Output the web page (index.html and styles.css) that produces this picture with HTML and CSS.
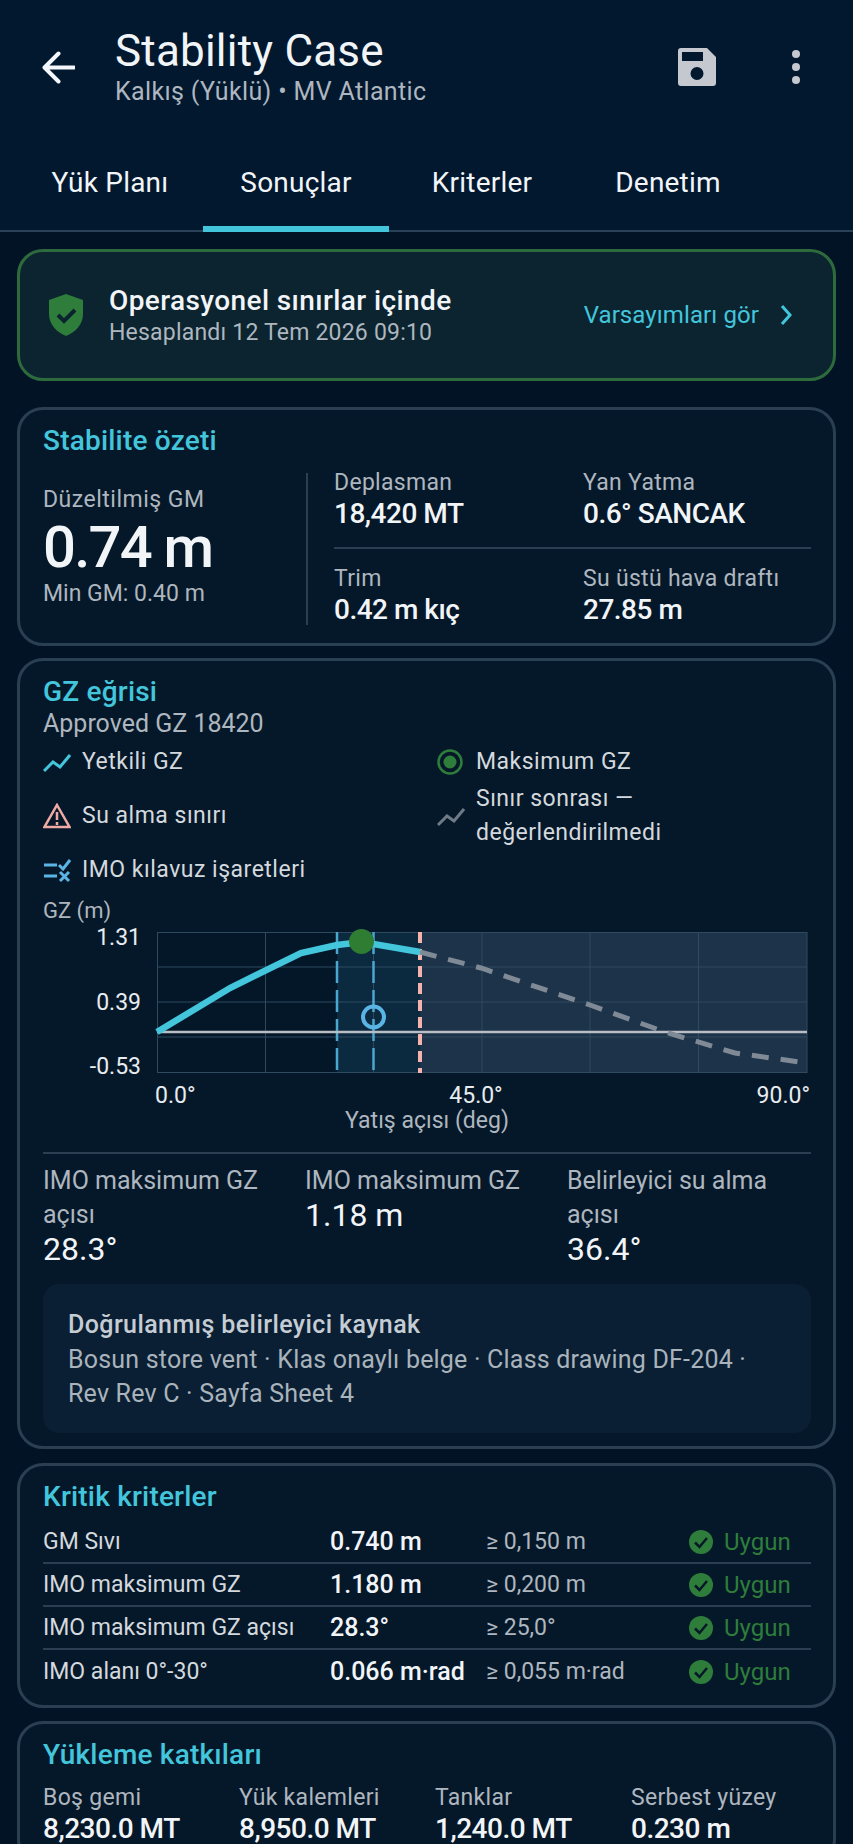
FILE: index.html
```html
<!DOCTYPE html>
<html lang="tr">
<head>
  <meta charset="UTF-8">
  <meta name="viewport" content="width=device-width, initial-scale=1.0">
  <title>Stability Case</title>
  <link rel="stylesheet" href="styles.css">
</head>
<body>
  <header class="appbar">
    <div class="topbar">
      <svg class="ic-back" viewBox="0 0 33 33" width="33" height="33"><path d="M32 16.500H3M16.500 2.500 2.500 16.500l14 14" fill="none" stroke="#f4f6fb" stroke-width="4" stroke-linecap="round" stroke-linejoin="round"/></svg>
      <div class="heading">
        <h1>Stability Case</h1>
        <p>Kalkış (Yüklü) • MV Atlantic</p>
      </div>
      <svg class="ic-save" viewBox="0 0 38 38" width="38" height="38"><path fill-rule="evenodd" d="M3 0h26l9 9v26a3 3 0 0 1-3 3H3a3 3 0 0 1-3-3V3a3 3 0 0 1 3-3zM4 4v9h21V4zM19 19a6.500 6.500 0 1 0 0 13 6.500 6.500 0 0 0 0-13z" fill="#c5c8cf"/></svg>
      <svg class="ic-more" viewBox="0 0 8 34" width="8" height="34"><circle cx="4" cy="4" r="4"/><circle cx="4" cy="17" r="4"/><circle cx="4" cy="30" r="4"/></svg>
    </div>
    <nav class="tabs">
      <a>Yük Planı</a>
      <a class="active">Sonuçlar</a>
      <a>Kriterler</a>
      <a>Denetim</a>
    </nav>
  </header>

  <main>
    <section class="status">
      <svg class="ic-shield" viewBox="0 0 34 42" width="34" height="42"><path d="M17 0 34 6v14c0 10-7 18-17 22C7 38 0 30 0 20V6z" fill="#2e7d3a"/><path d="M9 21l6 6 11-11" fill="none" stroke="#0b2430" stroke-width="4"/></svg>
      <div class="status-text">
        <strong>Operasyonel sınırlar içinde</strong>
        <span>Hesaplandı 12 Tem 2026 09:10</span>
      </div>
      <a class="status-link">Varsayımları gör</a>
      <svg class="ic-chevron" viewBox="0 0 12 22" width="12" height="22"><path d="M2 2l8 9-8 9" fill="none" stroke="#43c6dc" stroke-width="3"/></svg>
    </section>

    <section class="card summary">
      <h2>Stabilite özeti</h2>
      <div class="summary-body">
        <div class="summary-main">
          <span class="label">Düzeltilmiş GM</span>
          <strong class="big">0.74 m</strong>
          <span class="label">Min GM: 0.40 m</span>
        </div>
        <div class="summary-grid">
          <div class="stat"><span class="label">Deplasman</span><strong>18,420 MT</strong></div>
          <div class="stat"><span class="label">Yan Yatma</span><strong>0.6° SANCAK</strong></div>
          <div class="stat"><span class="label">Trim</span><strong>0.42 m kıç</strong></div>
          <div class="stat"><span class="label">Su üstü hava draftı</span><strong>27.85 m</strong></div>
        </div>
      </div>
    </section>

    <section class="card gz">
      <h2>GZ eğrisi</h2>
      <p class="gz-sub">Approved GZ 18420</p>
      <ul class="legend">
        <li><svg viewBox="0 0 28 26" width="28" height="26"><path d="M1 22l9-9 7 5L27 6" fill="none" stroke="#43c6dc" stroke-width="3"/></svg>Yetkili GZ</li>
        <li><svg viewBox="0 0 28 26" width="28" height="26"><circle cx="13" cy="13" r="11.500" fill="none" stroke="#2e7d3a" stroke-width="2.500"/><circle cx="13" cy="13" r="6.500" fill="#2e7d3a"/></svg>Maksimum GZ</li>
        <li><svg viewBox="0 0 28 26" width="28" height="26"><path d="M14 2 26.500 24h-25z" fill="none" stroke="#f0aaa4" stroke-width="2.500"/><path d="M14 9v8M14 19v3" stroke="#f0aaa4" stroke-width="2.500"/></svg>Su alma sınırı</li>
        <li><svg viewBox="0 0 28 26" width="28" height="26"><path d="M1 22l9-9 7 5L27 6" fill="none" stroke="#6f7a86" stroke-width="3"/></svg><span>Sınır sonrası —<br>değerlendirilmedi</span></li>
        <li><svg viewBox="0 0 28 26" width="28" height="26"><path d="M1 8h13M1 19h13M16 8l4 4 7-9M17 15l9 9M26 15l-9 9" fill="none" stroke="#5ab5e4" stroke-width="3"/></svg>IMO kılavuz işaretleri</li>
      </ul>

      <svg class="chart" viewBox="0 0 768 248" width="768" height="248">
        <text class="axis" x="0" y="31">GZ (m)</text>
        <text class="axis tick" x="98" y="58" text-anchor="end">1.31</text>
        <text class="axis tick" x="98" y="123" text-anchor="end">0.39</text>
        <text class="axis tick" x="98" y="187" text-anchor="end">-0.53</text>

        <rect x="114" y="45" width="180" height="141" fill="#031729"/>
        <rect x="294" y="45" width="83" height="141" fill="#0b2a40"/>
        <rect x="377" y="45" width="387" height="141" fill="#1d3349"/>
        <path class="grid" d="M114 45.500H764M114 80H764M114 115H764M114 150H764M114 185.500H764M114.500 45V186M222.500 45V186M330.500 45V186M439 45V186M547 45V186M655.500 45V186M764 45V186"/>

        <path d="M294 45V186M330.500 45V186" stroke="#4aa8d0" stroke-width="2.500" stroke-dasharray="22 7" fill="none"/>
        <path d="M114 145H764" stroke="#b9bec4" stroke-width="2.500"/>
        <path d="M377 45V186" stroke="#f4b3ad" stroke-width="4" stroke-dasharray="11 6" fill="none"/>
        <path d="M377 65L438 81 547 118 622 145 692 166 764 176" stroke="#7f8a96" stroke-width="5" stroke-dasharray="17 12" fill="none"/>
        <path d="M114 145L187 101 258 66 294 58 319 55 377 65" stroke="#43c6dc" stroke-width="6.500" fill="none"/>
        <circle cx="318.500" cy="54.500" r="12.500" fill="#2e7d32"/>
        <circle cx="330.500" cy="130" r="10.500" fill="none" stroke="#5ab5e4" stroke-width="4"/>

        <text class="axis tick" x="112" y="216">0.0°</text>
        <text class="axis tick" x="433" y="216" text-anchor="middle">45.0°</text>
        <text class="axis tick" x="767" y="216" text-anchor="end">90.0°</text>
        <text class="axis axis-title" x="384" y="241" text-anchor="middle">Yatış açısı (deg)</text>
      </svg>

      <div class="metrics">
        <div class="metric"><span class="label">IMO maksimum GZ açısı</span><strong>28.3°</strong></div>
        <div class="metric"><span class="label">IMO maksimum GZ</span><strong>1.18 m</strong></div>
        <div class="metric"><span class="label">Belirleyici su alma açısı</span><strong>36.4°</strong></div>
      </div>

      <div class="source">
        <strong>Doğrulanmış belirleyici kaynak</strong>
        <p>Bosun store vent · Klas onaylı belge · Class drawing DF-204 · Rev Rev C · Sayfa Sheet 4</p>
      </div>
    </section>

    <section class="card criteria">
      <h2>Kritik kriterler</h2>
      <div class="crit-row">
        <span>GM Sıvı</span><strong>0.740 m</strong><span class="limit">≥ 0,150 m</span>
        <span class="ok"><svg viewBox="0 0 24 24" width="24" height="24"><circle cx="12" cy="12" r="12" fill="#2e7d3a"/><path d="M6 12.500l4.500 4.500L18 8" fill="none" stroke="#051829" stroke-width="2.500"/></svg>Uygun</span>
      </div>
      <div class="crit-row">
        <span>IMO maksimum GZ</span><strong>1.180 m</strong><span class="limit">≥ 0,200 m</span>
        <span class="ok"><svg viewBox="0 0 24 24" width="24" height="24"><circle cx="12" cy="12" r="12" fill="#2e7d3a"/><path d="M6 12.500l4.500 4.500L18 8" fill="none" stroke="#051829" stroke-width="2.500"/></svg>Uygun</span>
      </div>
      <div class="crit-row">
        <span>IMO maksimum GZ açısı</span><strong>28.3°</strong><span class="limit">≥ 25,0°</span>
        <span class="ok"><svg viewBox="0 0 24 24" width="24" height="24"><circle cx="12" cy="12" r="12" fill="#2e7d3a"/><path d="M6 12.500l4.500 4.500L18 8" fill="none" stroke="#051829" stroke-width="2.500"/></svg>Uygun</span>
      </div>
      <div class="crit-row">
        <span>IMO alanı 0°-30°</span><strong>0.066 m·rad</strong><span class="limit">≥ 0,055 m·rad</span>
        <span class="ok"><svg viewBox="0 0 24 24" width="24" height="24"><circle cx="12" cy="12" r="12" fill="#2e7d3a"/><path d="M6 12.500l4.500 4.500L18 8" fill="none" stroke="#051829" stroke-width="2.500"/></svg>Uygun</span>
      </div>
    </section>

    <section class="card loads">
      <h2>Yükleme katkıları</h2>
      <div class="loads-grid">
        <div class="stat"><span class="label">Boş gemi</span><strong>8,230.0 MT</strong></div>
        <div class="stat"><span class="label">Yük kalemleri</span><strong>8,950.0 MT</strong></div>
        <div class="stat"><span class="label">Tanklar</span><strong>1,240.0 MT</strong></div>
        <div class="stat"><span class="label">Serbest yüzey</span><strong>0.230 m</strong></div>
      </div>
    </section>
  </main>
</body>
</html>
```

FILE: styles.css
```css
/* Reset */
* { box-sizing: border-box; }

html, body {
  height: 1844px;
  overflow: hidden;
}

body {
  margin: 0;
  width: 853px;
  background: #021325;
  color: #f2f5f8;
  font-family: Roboto, "Noto Sans", sans-serif;
  font-size: 24px;
}

h1, h2, p, ul { margin: 0; padding: 0; }
strong { font-weight: 500; }

/* --- App bar --- */
.appbar { background: #01182f; }

.topbar {
  display: flex;
  align-items: center;
  height: 134px;
  padding-left: 42px;
}

.ic-back { flex: none; }

.heading {
  flex: 1;
  margin-left: 40px;
}

.heading h1 {
  font-size: 44px;
  font-weight: 400;
  line-height: 48px;
  letter-spacing: 0.2px;
}

.heading p {
  font-size: 25px;
  line-height: 33px;
  letter-spacing: 0.35px;
  color: #aeb6bf;
}

.ic-save { flex: none; margin-right: 76px; }
.ic-more { flex: none; margin-right: 53px; fill: #c5c8cf; }

.tabs {
  display: flex;
  height: 98px;
  padding-left: 17px;
  border-bottom: 2px solid #2a4258;
}

.tabs a {
  display: flex;
  align-items: center;
  justify-content: center;
  width: 186px;
  padding-top: 4px;
  font-size: 28px;
  letter-spacing: 0.2px;
  margin-bottom: -2px;
  border-bottom: 6px solid transparent;
}

.tabs a.active { border-bottom-color: #43c6dc; }

/* --- Contenuto --- */
main {
  display: flex;
  flex-direction: column;
  gap: 13px;
  padding: 17px 17px 0;
}

.status {
  display: flex;
  align-items: center;
  height: 132px;
  margin-bottom: 13px;
  padding: 0 41px 0 29px;
  background: #0b2430;
  border: 3px solid #2d6b3c;
  border-radius: 26px;
}

.status-text {
  flex: 1;
  display: flex;
  flex-direction: column;
  margin-left: 26px;
}

.status-text strong { font-size: 28px; line-height: 36px; letter-spacing: 0.4px; }
.status-text span { font-size: 23px; line-height: 28px; letter-spacing: 0.2px; color: #aeb6bf; }

.status-link { font-size: 24px; letter-spacing: 0.1px; color: #43c6dc; margin-right: 21px; }

.card {
  padding: 13px 22px 16px 23px;
  background: #051829;
  border: 3px solid #2a3f52;
  border-radius: 26px;
}

.card h2 {
  font-size: 28px;
  font-weight: 500;
  line-height: 36px;
  letter-spacing: 0.2px;
  color: #43c6dc;
}

.label {
  font-size: 23px;
  line-height: 34px;
  color: #aeb6bf;
}

.stat {
  display: flex;
  flex-direction: column;
}

.stat .label { line-height: 28px; letter-spacing: 0.3px; }
.stat strong { font-size: 28px; line-height: 34px; letter-spacing: -0.5px; }

/* Riepilogo */
.summary-body {
  display: flex;
  margin-top: 10px;
}

.summary-main {
  width: 265px;
  display: flex;
  flex-direction: column;
  justify-content: center;
  margin: 4px 0 2px;
  padding-bottom: 4px;
  border-right: 2px solid #2a3f52;
}

.summary-main .label:first-child { letter-spacing: 0.5px; }

.big {
  font-size: 58px;
  line-height: 60px;
  letter-spacing: -1.8px;
}

.summary-grid {
  flex: 1;
  display: grid;
  grid-template-columns: 249px 1fr;
  margin-left: 26px;
}

.summary-grid .stat:nth-child(-n+2) {
  border-bottom: 2px solid #2a3f52;
  padding-bottom: 16px;
}

.summary-grid .stat:nth-child(n+3) { padding-top: 16px; }

/* GZ */
.gz { margin-top: -1px; padding-bottom: 13px; }

.gz-sub {
  font-size: 25px;
  line-height: 28px;
  color: #aeb6bf;
}

.legend {
  display: grid;
  grid-template-columns: 394px 1fr;
  gap: 3px 0;
  margin-top: 7px;
  list-style: none;
  font-size: 23px;
  line-height: 34px;
  letter-spacing: 0.5px;
  color: #d4d9de;
}

.legend li {
  display: flex;
  align-items: center;
  gap: 11px;
}

.chart { display: block; margin-top: 0; }

.chart .axis { font-size: 22px; fill: #aeb6bf; font-family: Roboto, sans-serif; }
.chart .tick { font-size: 23px; fill: #e8ecf0; }
.chart .axis-title { font-size: 23px; }
.chart .grid { stroke: #2f4a5e; stroke-width: 1; fill: none; }

.metrics {
  display: grid;
  grid-template-columns: 262px 262px 1fr;
  margin-top: 17px;
  padding-top: 10px;
  border-top: 2px solid #2a3f52;
}

.metric {
  display: flex;
  flex-direction: column;
  padding-right: 14px;
}

.metric .label { font-size: 25px; }
.metric strong { font-size: 32px; font-weight: 400; line-height: 34px; }

.source {
  margin-top: 18px;
  padding: 23px 25px 22px;
  background: #0a1f33;
  border-radius: 16px;
  font-size: 25px;
  line-height: 34px;
  letter-spacing: 0.2px;
  color: #a9b3bc;
}

.source strong { display: block; line-height: 36px; letter-spacing: 0.4px; color: #c5ccd3; }

/* Criteri */
.criteria { margin-top: 1px; padding-bottom: 12px; }
.criteria h2 { margin-bottom: 6px; }

.crit-row {
  display: grid;
  grid-template-columns: 287px 156px 203px 1fr;
  align-items: center;
  height: 43px;
  font-size: 23px;
  color: #d4d9de;
  border-bottom: 2px solid #2a3f52;
}

.crit-row:last-child { border-bottom: none; }
.crit-row strong { font-size: 25px; color: #f2f5f8; }
.crit-row .limit { color: #aeb6bf; }

.ok {
  display: flex;
  align-items: center;
  gap: 11px;
  font-size: 24px;
  color: #2e7d3a;
}

/* Carichi */
.loads-grid {
  display: grid;
  grid-template-columns: repeat(4, 196px);
  margin-top: 11px;
}
```
